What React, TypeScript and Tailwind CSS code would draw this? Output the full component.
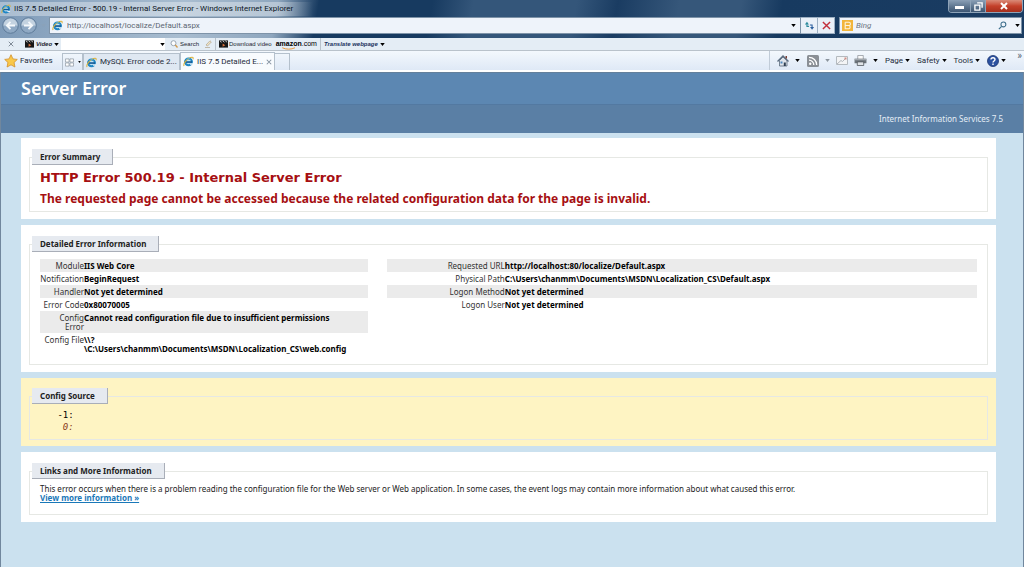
import React from "react";

const IeIcon = ({ className = "size-3" }: { className?: string }) => (
  <svg viewBox="0 0 16 16" className={`${className} shrink-0`} aria-hidden="true">
    <circle cx="8" cy="8.5" r="5" fill="#bfe3f5" stroke="#1f86c4" strokeWidth="3" />
    <path d="M4 8.800h9" stroke="#145a96" strokeWidth="2.400" />
    <path d="M9.500 10.600h5v2h-4z" fill="#e6f0f8" />
    <path d="M1.600 14.600C-.4 11.400 5 4.600 11 2.200c3-1.200 4.600-.4 3.400 2.600" fill="none" stroke="#d9b23c" strokeWidth="1.500" />
    <path d="M4.500 5.200C6 3.600 9 3 11 4.600" fill="none" stroke="#4fb0d8" strokeWidth="1.200" />
  </svg>
);

const Caret = ({ color = "text-black" }: { color?: string }) => (
  <svg viewBox="0 0 6 4" className={`h-[3px] w-[5px] shrink-0 ${color}`} aria-hidden="true">
    <path d="M0 0h6L3 4z" fill="currentColor" />
  </svg>
);

const Clapper = () => (
  <svg viewBox="0 0 10 8" className="h-2 w-[9px] shrink-0" aria-hidden="true">
    <path d="M0 0h10v8H0z" fill="#161616" />
    <path d="M1 1l2 1M4 .5l2 1.500M7 .5l2 1.500" stroke="#fff" strokeWidth=".8" />
    <path d="M4 3.500v3.500l3-1.700z" fill="#d8703a" />
  </svg>
);

const RoundButton = ({ label, flip }: { label: string; flip?: boolean }) => (
  <button aria-label={label} className="size-[17px] shrink-0">
    <svg viewBox="0 0 17 17" className={flip ? "size-full -scale-x-100" : "size-full"}>
      <circle cx="8.500" cy="8.500" r="7.800" fill="#8fa9c4" stroke="#5f7c9a" strokeWidth="1" />
      <path d="M1.500 8.500a7 7 0 0 1 14 0z" fill="#c3d2e0" />
      <path d="M13 8.500H5M8.500 4.800L4.800 8.500l3.700 3.700" fill="none" stroke="#f4f8fb" strokeWidth="1.800" />
    </svg>
  </button>
);

const TitleBar = () => (
  <div className="flex h-[17px] items-center justify-between">
    <div className="flex items-center gap-[3px] bg-linear-to-r from-white/35 from-90% to-transparent pr-5 pl-px text-[#0b1524]">
      <IeIcon className="size-[10px]" />
      <h1 className="text-[8px] leading-[14px]">
        IIS 7.5 Detailed Error - 500.19 - Internal Server Error - Windows Internet Explorer
      </h1>
    </div>
    <div className="mr-px flex h-[13px] self-start overflow-hidden rounded-b-sm border border-t-0 border-[#8ea3b8]">
      <button aria-label="Minimize" className="flex w-[21px] items-end justify-center bg-linear-to-b from-[#8ba0b6] to-[#3d5672] pb-[3px]">
        <span className="h-[3px] w-[9px] bg-white" />
      </button>
      <button aria-label="Restore" className="flex w-[16px] items-center justify-center border-x border-[#8ea3b8] bg-linear-to-b from-[#8ba0b6] to-[#3d5672]">
        <svg viewBox="0 0 10 10" className="size-[9px]">
          <path d="M3.500 1h5.500v5.500M1 3.500h5.500V9H1z" fill="none" stroke="#fff" strokeWidth="1.500" />
        </svg>
      </button>
      <button aria-label="Close" className="flex w-[36px] items-center justify-center bg-linear-to-b from-[#d98a78] via-[#c4402a] to-[#a52f1d]">
        <svg viewBox="0 0 10 8" className="h-2 w-[10px]">
          <path d="M2 1l6 6M8 1L2 7" stroke="#fff" strokeWidth="2" />
        </svg>
      </button>
    </div>
  </div>
);

const AddressBar = () => (
  <div className="flex h-[21px] items-start px-[2px]">
    <RoundButton label="Back" />
    <span className="w-px" />
    <RoundButton label="Forward" flip />
    <span className="flex h-[17px] w-[12px] items-center justify-center">
      <Caret color="text-[#8aa2ba]" />
    </span>
    <div className="flex h-[17px] flex-1 items-center border border-[#7e93a8] bg-[#eef3fa] pl-[2px]">
      <IeIcon className="size-[11px]" />
      <input
        aria-label="Address"
        defaultValue="http://localhost/localize/Default.aspx"
        className="ml-1 min-w-0 flex-1 text-[8px] text-[#5c6672] outline-none"
      />
      <button aria-label="Show address list" className="px-1">
        <Caret />
      </button>
    </div>
    <button aria-label="Refresh" className="flex h-[17px] w-[17px] items-center justify-center border border-l-0 border-[#9db0c3] bg-[#e9f0f8]">
      <svg viewBox="0 0 12 12" className="size-[11px]">
        <path d="M1 5L3.200 2 5.400 5z" fill="#2b8a9c" />
        <path d="M3.200 4.500V7H5.500" fill="none" stroke="#2b8a9c" strokeWidth="1.200" />
        <path d="M6.600 7.500L8.800 10.500 11 7.500z" fill="#2c5f9e" />
        <path d="M8.800 8V5.500H6.500" fill="none" stroke="#2c5f9e" strokeWidth="1.200" />
      </svg>
    </button>
    <button aria-label="Stop" className="flex h-[17px] w-[17px] items-center justify-center border border-l-0 border-[#9db0c3] bg-[#e9f0f8]">
      <svg viewBox="0 0 10 10" className="size-[9px]">
        <path d="M1 1l8 8M9 1L1 9" stroke="#c22f3c" strokeWidth="1.600" />
      </svg>
    </button>
    <div className="ml-1 flex h-[17px] w-[183px] items-center border border-[#7e93a8] bg-[#eef3fa] pl-[2px]">
      <svg viewBox="0 0 12 12" className="size-[11px] shrink-0" aria-hidden="true">
        <path d="M0 0h12v12H0z" fill="#f2b53b" />
        <path d="M3.500 2.500h4a1.700 1.700 0 0 1 0 3.500 1.800 1.800 0 0 1 0 3.500h-4V6h4M3.500 2.500V6" fill="none" stroke="#fdf3da" strokeWidth="1.200" />
      </svg>
      <input
        aria-label="Search the web"
        placeholder="Bing"
        className="ml-[3px] min-w-0 flex-1 text-[8px] italic outline-none placeholder:text-[#6b7480]"
      />
      <button aria-label="Search" className="px-1">
        <svg viewBox="0 0 10 10" className="size-[9px]">
          <circle cx="6" cy="3.800" r="2.700" fill="none" stroke="#3d6e8c" strokeWidth="1.200" />
          <path d="M4 6L1 9" stroke="#3d6e8c" strokeWidth="1.400" />
        </svg>
      </button>
      <button aria-label="Search options" className="pr-px pl-1">
        <Caret />
      </button>
    </div>
  </div>
);

const VideoToolbar = () => (
  <div className="flex h-[13px] items-center border-b border-[#b9c2cb] bg-[#e4edf5] font-['Liberation_Sans',sans-serif] text-[6px] leading-3 text-[#1c2733]">
    <button aria-label="Close toolbar" className="ml-[8px] w-[7px]">
      <svg viewBox="0 0 8 8" className="size-[6px]">
        <path d="M1 1l6 6M7 1L1 7" stroke="#7c8894" strokeWidth="1.300" />
      </svg>
    </button>
    <button className="ml-[10px] flex w-[36px] items-center gap-[2px] font-bold italic">
      <Clapper />
      Video
      <Caret />
    </button>
    <div className="flex h-3 w-[104px] items-center bg-white">
      <input aria-label="Video search" className="min-w-0 flex-1 outline-none" />
      <Caret />
    </div>
    <button className="ml-[5px] flex items-center gap-[2px]">
      <svg viewBox="0 0 8 8" className="size-2">
        <circle cx="3.500" cy="3.200" r="2.500" fill="#fff" stroke="#9aa7b3" />
        <path d="M5.300 5L7.500 7.500" stroke="#d39a4a" strokeWidth="1.300" />
      </svg>
      Search
    </button>
    <button aria-label="Highlight" className="ml-[5px]">
      <svg viewBox="0 0 8 8" className="size-2">
        <path d="M2 5L6 .8l1.300 1.200L3.500 6zM1 7.500h5" fill="#f3e6c4" stroke="#b6ab97" strokeWidth=".8" />
      </svg>
    </button>
    <span className="mx-[3px] h-3 w-px bg-[#b9c2cb]" />
    <button className="flex items-center gap-px">
      <Clapper />
      Download video
    </button>
    <a href="#amazon" className="relative ml-1 text-[7px] leading-[10px] font-bold text-black">
      amazon<span className="font-normal">.com</span>
      <svg viewBox="0 0 20 4" className="absolute top-[8px] left-[4px] h-[3px] w-[18px]" aria-hidden="true">
        <path d="M1 1c5 2.500 12 2.500 17 0" fill="none" stroke="#e8963a" strokeWidth="1.300" />
      </svg>
    </a>
    <span className="mx-[3px] h-3 w-px bg-[#b9c2cb]" />
    <button className="flex items-center gap-[2px] font-bold text-[#22325e] italic">
      Translate webpage
      <Caret />
    </button>
  </div>
);

const Tab = ({ title, active }: { title: string; active?: boolean }) => (
  <div
    className={
      active
        ? "flex h-[18px] w-[95px] items-center gap-[3px] border-x border-t border-[#b4c0cc] bg-[#f8fbfe] px-[2px]"
        : "flex h-[17px] w-[97px] items-center gap-[3px] border-x border-t border-[#b4c0cc] bg-[#dfe8f2] px-[2px]"
    }
  >
    <IeIcon className="size-[11px]" />
    <button className="flex-1 text-left whitespace-nowrap">{title}</button>
    {active && (
      <button aria-label="Close tab" className="pr-[2px]">
        <svg viewBox="0 0 8 8" className="size-[6px]">
          <path d="M1 1l6 6M7 1L1 7" stroke="#8391a0" strokeWidth="1.400" />
        </svg>
      </button>
    )}
  </div>
);

const CommandBar = () => (
  <div className="flex h-[19px] w-[255px] items-center border-l border-[#c1ccd8] pl-[7px]">
    <button aria-label="Home" className="mr-[6px]">
      <svg viewBox="0 0 12 12" className="size-3">
        <path d="M2.500 5.500V11h7.500V5.500L6 2z" fill="#dfe5ec" stroke="#58687a" strokeWidth=".8" />
        <path d="M.5 6.500L6 1l5.500 5.500" fill="none" stroke="#5a6c80" strokeWidth="1.300" />
        <path d="M8.500 1h1.500v2.500H8.500z" fill="#7a3f36" />
        <path d="M3.500 6.500h2v2h-2z" fill="#4f86bb" />
        <path d="M6.800 7.500h2V11h-2z" fill="#2f3f52" />
      </svg>
    </button>
    <Caret />
    <button aria-label="Feeds" className="mr-[6px] ml-[7px]">
      <svg viewBox="0 0 12 12" className="size-3">
        <rect width="12" height="12" rx="1.500" fill="#8a8f95" />
        <circle cx="3.200" cy="8.800" r="1.200" fill="#fff" />
        <path d="M2 5.200A4.800 4.800 0 0 1 6.800 10M2 2.300A7.700 7.700 0 0 1 9.700 10" fill="none" stroke="#fff" strokeWidth="1.300" />
      </svg>
    </button>
    <Caret color="text-[#8b949d]" />
    <button aria-label="Read mail" className="ml-[6px]">
      <svg viewBox="0 0 12 9" className="h-[9px] w-3">
        <path d="M.5.5h11v8H.5z" fill="#f3f4f5" stroke="#b4babf" />
        <path d="M1 8l4-3.500 1.500 1L9 3" fill="none" stroke="#a8aeb4" strokeWidth=".9" />
        <path d="M8.500 1.500h2v2h-2z" fill="#cf8d85" />
      </svg>
    </button>
    <button aria-label="Print" className="mr-[6px] ml-[6px]">
      <svg viewBox="0 0 14 12" className="h-[11px] w-[13px]">
        <path d="M4 .5h6V5H4z" fill="#fafafa" stroke="#8a9097" strokeWidth=".8" />
        <path d="M.5 4h13v5H.5z" fill="#6d747b" />
        <path d="M1 4.500h12v1.200H1z" fill="#a9afb5" />
        <path d="M3.500 7.500h7v4h-7z" fill="#dfe3e6" stroke="#454b51" strokeWidth=".8" />
      </svg>
    </button>
    <Caret />
    {["Page", "Safety", "Tools"].map((name) => (
      <button key={name} className="ml-[7px] flex items-center gap-[2px]">
        {name}
        <Caret />
      </button>
    ))}
    <button aria-label="Help" className="ml-[7px] flex items-center gap-[2px]">
      <svg viewBox="0 0 12 12" className="size-3">
        <circle cx="6" cy="6" r="5.500" fill="#2c52a0" stroke="#1b3570" strokeWidth=".8" />
        <path d="M4 4.600c0-2.400 4-2.400 4 0C8 6 6 6 6 7.600M6 8.500v1.400" fill="none" stroke="#fff" strokeWidth="1.400" />
      </svg>
      <Caret />
    </button>
    <button aria-label="More" className="ml-auto self-start pr-[2px] text-[10px] leading-[9px] text-[#5a6672]">
      »
    </button>
  </div>
);

const TabRow = () => (
  <div className="flex h-[21px] items-start justify-between border-b-2 border-white bg-linear-to-b from-[#f3f8fd] to-[#dfe9f6] text-[8px] leading-3 text-[#1e2c3a]">
    <div className="flex h-[19px] items-end">
      <button className="flex h-[19px] w-[62px] items-center gap-[2px] pl-1">
        <svg viewBox="0 0 16 16" className="size-[14px]" aria-hidden="true">
          <path
            d="M8 .8l2.200 4.800 5 .6-3.700 3.500 1 5.200L8 12.400 3.500 14.900l1-5.200L.8 6.200l5-.6z"
            fill="#f9c84a"
            stroke="#d38f28"
            strokeWidth=".9"
          />
        </svg>
        Favorites
      </button>
      <button aria-label="Quick tabs" className="flex h-[17px] w-[21px] items-center gap-1 border border-b-0 border-[#b4c0cc] pl-[2px]">
        <svg viewBox="0 0 10 10" className="size-[9px] shrink-0">
          <path d="M.5 1h4v3.500h-4zM5.500 1h4v3.500h-4zM.5 5.500h4V9h-4zM5.500 5.500h4V9h-4z" fill="#fff" stroke="#9098a2" strokeWidth=".8" />
        </svg>
        <svg viewBox="0 0 4 3" className="h-[2px] w-[3px] shrink-0">
          <path d="M0 0h4L2 3z" />
        </svg>
      </button>
      <Tab title="MySQL Error code 2..." />
      <Tab title="IIS 7.5 Detailed E..." active />
      <button aria-label="New tab" className="h-[17px] w-[15px] border border-b-0 border-l-0 border-[#b4c0cc]" />
    </div>
    <CommandBar />
  </div>
);

type PanelProps = { title: string; tint?: boolean; children: React.ReactNode };

const Panel = ({ title, tint, children }: PanelProps) => (
  <section className={tint ? "bg-[#fef4c3] px-[8px] pt-[10px] pb-[6px]" : "bg-white px-[8px] pt-[11px] pb-[7px]"}>
    <fieldset className="border border-[#e6e8e4] px-[2px]">
      <legend className="border-r border-b border-[#a9aeb8] bg-[#e6eaf0] pr-3 pl-2 text-[8px] leading-[15px] font-bold text-[#222]">
        {title}
      </legend>
      <div className="px-2">{children}</div>
    </fieldset>
  </section>
);

type Row = [string, string];

const leftRows: Row[] = [
  ["Module", "IIS Web Core"],
  ["Notification", "BeginRequest"],
  ["Handler", "Not yet determined"],
  ["Error Code", "0x80070005"],
  ["Config Error", "Cannot read configuration file due to insufficient permissions"],
  ["Config File", "\\\\?\n\\C:\\Users\\chanmm\\Documents\\MSDN\\Localization_CS\\web.config"],
];

const rightRows: Row[] = [
  ["Requested URL", "http://localhost:80/localize/Default.aspx"],
  ["Physical Path", "C:\\Users\\chanmm\\Documents\\MSDN\\Localization_CS\\Default.aspx"],
  ["Logon Method", "Not yet determined"],
  ["Logon User", "Not yet determined"],
];

const DetailTable = ({ rows, className, labelWidth }: { rows: Row[]; className: string; labelWidth: string }) => (
  <table className={`${className} table-fixed self-start leading-[9px]`}>
    <tbody>
      {rows.map(([label, value]) => (
        <tr key={label} className="odd:bg-[#ebebeb]">
          <th className={`${labelWidth} py-[2px] text-right align-top font-normal text-[#333]`}>{label}</th>
          <td className="py-[2px] align-top font-bold whitespace-pre text-black">{value}</td>
        </tr>
      ))}
    </tbody>
  </table>
);

export default function App() {
  return (
    <div className="flex min-h-screen flex-col bg-[#cbe1ef] font-['Roboto',sans-serif]">
      <div className="bg-[linear-gradient(100deg,#7d9ab8_0%,#a9bdd0_18%,#8ea6be_27%,#173a60_31%,#173a60_42%,#34567a_46%,#34567a_56%,#1a3c62_60%,#36577a_66%,#36577a_72%,#173a60_76%,#1a3c62_100%)]">
        <TitleBar />
        <AddressBar />
      </div>
      <VideoToolbar />
      <TabRow />

      <div className="flex-1 border-x border-[#71879d] font-['Noto_Sans',sans-serif] text-[8px]">
        <header className="text-white">
          <div className="border-t border-b border-t-[#64809b] border-b-[#5379a1] bg-[#5c87b2] pl-5 text-[18px] leading-[31px] font-semibold">
            Server Error
          </div>
          <div className="bg-[#5a7fa5] pr-5 text-right leading-[28px] text-[#e4edf5]">
            Internet Information Services 7.5
          </div>
        </header>

        <main className="flex flex-col gap-[6px] py-[5px] pr-[27px] pl-5">
          <Panel title="Error Summary">
            <h2 className="pt-[3px] font-['DejaVu_Sans',sans-serif] text-[13px] leading-5 font-bold text-[#a60f12]">
              HTTP Error 500.19 - Internal Server Error
            </h2>
            <h3 className="pb-px text-[12px] leading-[22px] font-bold text-[#a60f12]">
              The requested page cannot be accessed because the related configuration data for the page is invalid.
            </h3>
          </Panel>

          <Panel title="Detailed Error Information">
            <div className="flex justify-between pt-[7px] pb-[9px]">
              <DetailTable rows={leftRows} className="w-[35%]" labelWidth="w-[44px]" />
              <DetailTable rows={rightRows} className="w-[63%]" labelWidth="w-1/5" />
            </div>
          </Panel>

          <Panel title="Config Source" tint>
            <pre className="pt-[5px] pb-[6px] pl-3 font-['DejaVu_Sans_Mono',monospace] text-[9px] leading-3 text-black">
              {" -1:\n"}
              <i className="text-[#8b3a1c]">{"  0:"}</i>
            </pre>
          </Panel>

          <Panel title="Links and More Information">
            <p className="pt-[5px] pb-[12px] leading-[9px] text-[#222]">
              This error occurs when there is a problem reading the configuration file for the Web server or Web
              application. In some cases, the event logs may contain more information about what caused this error.
              <br />
              <a href="#more" className="font-bold text-[#1a78b8] underline">
                View more information »
              </a>
            </p>
          </Panel>
        </main>
      </div>
    </div>
  );
}
